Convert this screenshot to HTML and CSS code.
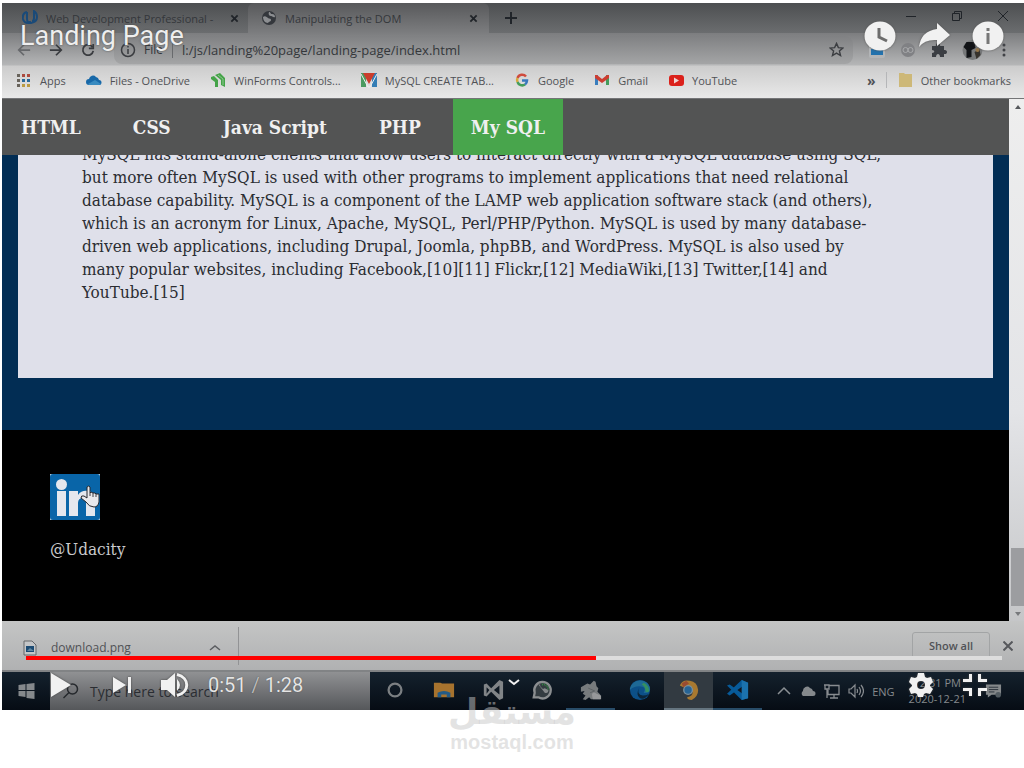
FILE: index.html
```html
<!DOCTYPE html>
<html lang="en">
<head>
<meta charset="utf-8">
<title>Landing Page</title>
<link rel="stylesheet" href="styles.css">
</head>
<body>
<main class="player">
  <header class="chrome">
    <div class="tabs">
      <div class="tab tab-first">
        <svg class="icon16" viewBox="0 0 16 16" fill="none" stroke="#1a4a78" stroke-width="2"><path d="M5 2Q0 3 1 9q1 4 5 4 2 0 2-2M5 2v7q0 4 4 4 6-1 6-6 0-4-3-6v7q0 3-2 3"/></svg>
        <span>Web Development Professional -</span>
        <button class="x" aria-label="Close tab"><svg viewBox="0 0 10 10"><path d="M1.500 1.500l7 7M8.500 1.500l-7 7"/></svg></button>
      </div>
      <div class="tab tab-active">
        <svg class="icon16" viewBox="0 0 16 16"><circle cx="8" cy="8" r="7" fill="#34373c"/><path d="M2 7c2-2 4 0 5 1s3 0 3 2-2 1-3 3c-3 0-5-3-5-6zM8 2c2 0 1 2 3 2s3 1 3 3c-2 1-2-1-4-1S7 4 8 2z" fill="#8c8e91"/></svg>
        <span>Manipulating the DOM</span>
        <button class="x" aria-label="Close tab"><svg viewBox="0 0 10 10"><path d="M1.500 1.500l7 7M8.500 1.500l-7 7"/></svg></button>
      </div>
      <button class="new-tab" aria-label="New tab"><svg viewBox="0 0 12 12"><path d="M6 0v12M0 6h12"/></svg></button>
      <div class="window-buttons">
        <button aria-label="Minimize"><svg viewBox="0 0 12 12"><path d="M1 6.500h10"/></svg></button>
        <button aria-label="Restore"><svg viewBox="0 0 12 12"><path d="M1.500 3.500h7v7h-7zM3.500 3.500v-2h7v7h-2"/></svg></button>
        <button aria-label="Close"><svg viewBox="0 0 12 12"><path d="M1 1l10 10M11 1L1 11"/></svg></button>
      </div>
    </div>
    <div class="toolbar">
      <button class="nav-button dim" aria-label="Back"><svg viewBox="0 0 16 16"><path d="M15 8H2M8 2L2 8l6 6"/></svg></button>
      <button class="nav-button" aria-label="Forward"><svg viewBox="0 0 16 16"><path d="M1 8h13M8 2l6 6-6 6"/></svg></button>
      <button class="nav-button" aria-label="Reload"><svg viewBox="0 0 16 16"><path d="M13 4.500A6 6 0 1 0 14 9M14 1v5H9"/></svg></button>
      <div class="address">
        <svg class="icon16" viewBox="0 0 16 16" fill="none" stroke="#3a3c40" stroke-width="1.500"><circle cx="8" cy="8" r="6.500"/><path d="M8 7v5M8 4v1.500"/></svg>
        <span class="scheme">File</span>
        <span class="url">l:/js/landing%20page/landing-page/index.html</span>
        <svg class="star" viewBox="0 0 16 16" fill="none" stroke="#3c3e42" stroke-width="1.500"><path d="M8 1.500l2 4.500 4.800.400-3.700 3.200 1.200 4.800L8 11.800l-4.300 2.600 1.200-4.800L1.200 6.400 6 6z"/></svg>
      </div>
      <div class="extensions">
        <svg viewBox="0 0 16 16"><rect width="16" height="15" y="1" rx="2" fill="#b3b5b7"/><rect x="2" y="7" width="12" height="6" fill="#2372ad"/></svg>
        <svg viewBox="0 0 16 16"><circle cx="8" cy="8" r="7" fill="#808184"/><g fill="none" stroke="#a8a9ab"><circle cx="5.500" cy="8" r="2.500"/><circle cx="10.500" cy="8" r="2.500"/></g></svg>
        <svg viewBox="0 0 16 16"><path d="M1 4h4c-1-4 5-4 4 0h4v4c4-1 4 5 0 4v3H9c0-4-4-4-4 0H1v-4c3 0 3-3 0-3z" fill="#3b3e43"/></svg>
        <svg class="avatar" viewBox="0 0 20 20"><circle cx="10" cy="10" r="10" fill="#77797a"/><path d="M1 7l3-5h8l1 6-4 2v7l-5 1V10z" fill="#111316"/><path d="M12 12l5-3 1 6-4 4z" fill="#36322c"/><circle cx="15" cy="10" r="2" fill="#93754a"/></svg>
        <svg class="dots" viewBox="0 0 4 16"><g fill="#404246"><circle cx="2" cy="3" r="1.500"/><circle cx="2" cy="8" r="1.500"/><circle cx="2" cy="13" r="1.500"/></g></svg>
      </div>
    </div>
    <nav class="bookmarks" aria-label="Bookmarks">
      <a href="#"><svg viewBox="0 0 16 16"><g fill="#68635b"><path d="M1 2h3v3H1zM1 7h3v3H1zM1 12h3v3H1z"/></g><path d="M6 2h3v3H6zM11 2h3v3h-3z" fill="#ab4a3e"/><path d="M6 7h3v3H6zM11 7h3v3h-3z" fill="#28699a"/><path d="M6 12h3v3H6zM11 12h3v3h-3z" fill="#ba9b43"/></svg>Apps</a>
      <a href="#"><svg viewBox="0 0 16 16"><path d="M3 13a3 3 0 0 1 0-6 4 4 0 0 1 7-2 4 4 0 0 1 3 3 2.500 2.500 0 0 1 0 5z" fill="#1768a8"/><path d="M2 12l7-4 6 4-2 1H3z" fill="#398bc0"/></svg>Files - OneDrive</a>
      <a href="#"><svg viewBox="0 0 16 16"><path d="M1 5l3-1 4 4v7H5v-5L1 7zM5 3l5-2 5 5v9l-4-2V8z" fill="#44a348"/><path d="M8 3l5 4v6" fill="none" stroke="#8cc88e"/></svg>WinForms Controls...</a>
      <a href="#"><svg viewBox="0 0 16 16"><path d="M0 1h5v14H0z" fill="#4b9a60"/><path d="M16 1h-5v14h5z" fill="#347eb5"/><path d="M2 1h12L8 12z" fill="#cb3d2c"/><path d="M0 2l7 13h2l7-13" fill="none" stroke="#eee"/></svg>MySQL CREATE TAB...</a>
      <a href="#"><svg viewBox="0 0 16 16" fill="none" stroke-width="2.500"><path d="M12 4.500A5 5 0 0 0 3.500 6" stroke="#cf4b3d"/><path d="M3.500 6a5 5 0 0 0 0 4" stroke="#d6a83a"/><path d="M3.500 10a5 5 0 0 0 7.500 2.500" stroke="#459d59"/><path d="M11 12.500a5 5 0 0 0 2-4H8" stroke="#3979bd"/></svg>Google</a>
      <a href="#"><svg viewBox="0 0 16 16"><path d="M1 3h3v10H1z" fill="#397dbd"/><path d="M12 3h3v10h-3z" fill="#449c5c"/><path d="M1 3h2l5 4 5-4h2v3l-7 5-7-5z" fill="#cd3d31"/></svg>Gmail</a>
      <a href="#"><svg viewBox="0 0 16 16"><rect x="1" y="3" width="15" height="11" rx="3" fill="#db211b"/><path d="M6 5.500v6l5-3z" fill="#efd5d3"/></svg>YouTube</a>
      <span class="more">»</span>
      <a class="other" href="#"><svg viewBox="0 0 16 16"><path d="M2 1h5l1 1h7v13H2z" fill="#cdb878"/></svg>Other bookmarks</a>
    </nav>
  </header>

  <section class="viewport">
    <div class="page">
      <nav class="site-nav">
        <a href="#">HTML</a><a href="#">CSS</a><a href="#">Java Script</a><a href="#">PHP</a><a class="active" href="#">My SQL</a>
      </nav>
      <div class="band">
        <article class="card">
          <p>MySQL has stand-alone clients that allow users to interact directly with a MySQL database using SQL,<br>but more often MySQL is used with other programs to implement applications that need relational<br>database capability. MySQL is a component of the LAMP web application software stack (and others),<br>which is an acronym for Linux, Apache, MySQL, Perl/PHP/Python. MySQL is used by many database-<br>driven web applications, including Drupal, Joomla, phpBB, and WordPress. MySQL is also used by<br>many popular websites, including Facebook,[10][11] Flickr,[12] MediaWiki,[13] Twitter,[14] and<br>YouTube.[15]</p>
        </article>
      </div>
      <footer class="site-footer">
        <a class="linkedin" href="#" aria-label="LinkedIn">
          <svg viewBox="0 0 50 46"><rect width="50" height="46" fill="#b9c9d6"/><rect width="50" height="46" rx="3" fill="#0965a8"/><g fill="#e4e7ee"><circle cx="11.500" cy="10.500" r="5.500"/><path d="M7 17h9v25H7zM19 17h9v4c3-5 9-5 13-3 3 2 4 5 4 9v15h-9V29c0-7-8-6-8 0v13h-9z"/></g><path d="M37 13q2-2 3 0v6l1-1 2 1 2 0 1 1 3 0v8q-1 5-5 5-5 0-8-5l-5-4q0-3 3-2l3 2z" fill="#e9e9ec" stroke="#25272c"/><path d="M40 19v3M43 19v4M46 20v3" stroke="#3a3c42"/></svg>
        </a>
        <p>@Udacity</p>
      </footer>
    </div>
    <div class="scrollbar"><span class="arrow-up"></span><span class="thumb"></span><span class="arrow-down"></span></div>
  </section>

  <section class="downloads">
    <div class="file">
      <svg viewBox="0 0 14 16"><path d="M1 1h8l4 4v10H1z" fill="#c4c6c8" stroke="#66686b"/><path d="M3 6h8v6H3z" fill="#1c4b73"/><path d="M4 11l3-3 4 3" fill="#6088a2"/></svg>
      <span>download.png</span>
      <button aria-label="File options"><svg viewBox="0 0 12 8" fill="none" stroke="#5b5d60" stroke-width="1.500"><path d="M1 6l5-4 5 4"/></svg></button>
    </div>
    <button class="show-all">Show all</button>
    <button class="x close-bar" aria-label="Close downloads"><svg viewBox="0 0 10 10"><path d="M.5.5l9 9M9.500.5l-9 9"/></svg></button>
  </section>

  <section class="taskbar">
    <button class="start" aria-label="Start"><svg viewBox="0 0 16 16" fill="#85898c"><path d="M0 2l7-1v6H0zM8 1l8-1v7H8zM0 8h7v6l-7-1zM8 8h8v8l-8-1z"/></svg></button>
    <div class="search"><svg viewBox="0 0 16 16" fill="none" stroke="#25282c" stroke-width="1.500"><circle cx="10" cy="6" r="5"/><path d="M6.500 9.500L1 15"/></svg><span>Type here to search</span></div>
    <div class="apps">
      <span><svg viewBox="0 0 24 24"><circle cx="12" cy="12" r="7" fill="none" stroke="#7b7f82" stroke-width="2.500"/></svg></span>
      <span><svg viewBox="0 0 24 24"><path d="M1 4h7l2 1h13v15H1z" fill="#a7732e"/><path d="M5 20v-5q7-4 14 0v5h-4v-3H9v3z" fill="#245b86"/></svg></span>
      <span><svg viewBox="0 0 24 24"><path d="M2 6l3-1 5 5 9-9 4 2v18l-4 2-9-9-5 5-3-1zM5 9v7l3-4zM19 7l-6 5 6 5z" fill="#818487" fill-rule="evenodd"/></svg></span>
      <span><svg viewBox="0 0 24 24"><path d="M3 20l1-5a9 9 0 1 1 4 5z" fill="#343c41" stroke="#8b8e90" stroke-width="2.500"/><path d="M8 6l7 9q4 1 4-3l-4-2-2 1-3-3V6z" fill="#85888a"/><path d="M12 6q6-1 7 6" fill="none" stroke="#318a42" stroke-width="2" stroke-dasharray="1 1"/></svg></span>
      <span class="open"><svg viewBox="0 0 24 24"><path d="M1 9l7-4 3 1 4-4 2 1 1 5 2 2-1 4 3 3v5H12l-2-2-4 3-3-1 3-4-3-2 2-3-4 1z" fill="#777b7d"/><path d="M13 17q1-4 5-1l5 2v4h-9z" fill="#96989a"/><path d="M9 10l7 3-5 2" fill="none" stroke="#5b6064"/></svg></span>
      <span><svg viewBox="0 0 24 24"><circle cx="12" cy="12" r="11" fill="#0c5088"/><path d="M1 10Q5 0 15 2q8 2 8 10-1 4-7 3 4-7-5-7-6 0-10 4z" fill="#1e6995"/><path d="M16 4q6 3 6 9-1 2-4 1 0-6-4-8z" fill="#348f61"/><path d="M11 10q-3 7 4 8 4 0 7-2-5 7-10 5-5-4-1-11z" fill="#0b263b"/></svg></span>
      <span class="current"><svg viewBox="0 0 24 24"><path d="M2 7Q5 0 13 2q8 1 9 10 0 7-7 11-5 0-5-3 6-1 6-6L2 7z" fill="#a87930"/><circle cx="11" cy="12" r="5.500" fill="#7b8f9b"/><circle cx="11" cy="12" r="4" fill="#276495"/><path d="M4 5l5-3 3 3-6 4z" fill="#9a4c31"/></svg></span>
      <span class="open"><svg viewBox="0 0 24 24"><path d="M0 7l3-1 14 10V8L3 18l-3-2L16 1l7 3v17l-7 2z" fill="#075a99"/><path d="M16 1l7 3v17l-7 2z" fill="#1b72ae"/></svg></span>
    </div>
    <div class="tray">
      <svg viewBox="0 0 16 16" fill="none" stroke="#8b9094" stroke-width="1.500"><path d="M2 11l6-6 6 6"/></svg>
      <svg viewBox="0 0 16 16"><path d="M3 13a3 3 0 0 1 0-5 4 4 0 0 1 7-3 4 4 0 0 1 3 3 2.500 2.500 0 0 1 0 5z" fill="#85898c"/></svg>
      <svg viewBox="0 0 16 16" fill="none" stroke="#888c90" stroke-width="1.300"><path d="M5 2.500h10v9H4V7M10 12v3M6 15h8M0 2h5v4H1V2M3 6v9"/></svg>
      <svg viewBox="0 0 16 16" fill="none" stroke="#888c90" stroke-width="1.200"><path d="M1 6h2l4-4v12l-4-4H1zM9 6q1 2 0 4M11 4q3 4 0 8M13 2q5 6 0 12"/></svg>
      <span>ENG</span>
      <time>12:31 PM<br>2020-12-21</time>
      <svg class="notice" viewBox="0 0 18 16"><path d="M1 1h16v11H7l-4 3v-3H1z" fill="#85898b"/><path d="M4 4h10M4 6.500h10M4 9h6" stroke="#283139"/><circle cx="14" cy="12" r="3" fill="#535c62"/></svg>
    </div>
  </section>

  <div class="overlay-top">
    <h1>Landing Page</h1>
    <div class="actions">
      <button aria-label="Watch later"><svg viewBox="0 0 32 30"><ellipse cx="16" cy="15" rx="15.500" ry="14.500" fill="#f1f1f1"/><path d="M15 7v9l8 4" fill="none" stroke="#6d6d6d" stroke-width="3"/></svg></button>
      <button aria-label="Share"><svg viewBox="0 0 32 30"><path d="M19 2l13 12-13 11v-6Q7 18 1 26 3 10 19 8z" fill="#f1f1f1"/></svg></button>
      <button aria-label="Info"><svg viewBox="0 0 32 30"><ellipse cx="16" cy="15" rx="15.500" ry="14.500" fill="#f1f1f1"/><path d="M16 12v11M16 7v3" stroke="#777" stroke-width="3"/></svg></button>
    </div>
  </div>

  <div class="overlay-bottom">
    <div class="progress"><div class="played" style="width:58.400%"></div></div>
    <div class="controls">
      <button aria-label="Play"><svg class="play" viewBox="0 0 22 24"><path d="M1 0l20 12L1 24z"/></svg></button>
      <button aria-label="Next"><svg class="next" viewBox="0 0 20 18"><path d="M1 1l13 8-13 8zM16 1h3v16h-3z"/></svg></button>
      <button aria-label="Mute"><svg class="volume" viewBox="0 0 28 24"><path d="M0 7h6l8-7v24l-8-7H0zM16 6q6 6 0 12z"/><path d="M16 1.500c13 3 13 18 0 21" fill="none" stroke="#f1f1f1" stroke-width="3"/></svg></button>
      <span class="time">0:51 <i>/</i> 1:28</span>
      <div class="right">
        <button aria-label="Settings"><svg class="gear" viewBox="0 0 24 24"><path fill-rule="evenodd" d="M9 0h6l1 4 2 1 4-1 2 5-3 3v1l3 3-3 5-4-1-2 1-1 3H9l-1-3-2-1-4 1-2-5 3-3v-1L0 9l2-5 4 1 2-1zM12 8a4 4 0 1 0 0 8 4 4 0 0 0 0-8z"/></svg></button>
        <button aria-label="Exit full screen"><svg class="fullscreen" viewBox="0 0 24 22"><path d="M7.500 0v6.500H0M16.500 0v6.500H24M0 15.500h7.500V22M24 15.500h-7.500V22" fill="none" stroke="#f1f1f1" stroke-width="3"/></svg></button>
      </div>
    </div>
    <button class="expand" aria-label="More videos"><svg viewBox="0 0 12 7" fill="none" stroke="#f1f1f1" stroke-width="2"><path d="M1 1l5 4 5-4"/></svg></button>
  </div>
</main>
<div class="watermark"><span class="brand" lang="ar" dir="rtl">مستقل</span><span class="domain">mostaql.com</span></div>
</body>
</html>
```
FILE: styles.css
```css
* { box-sizing: border-box; }
body { margin: 0; background: #fff; font-family: "Open Sans", sans-serif; font-size: 11px; color: #34373b; }
button { display: inline-flex; align-items: center; justify-content: center; padding: 0; border: 0; background: none; color: inherit; font: inherit; }
a { color: inherit; text-decoration: none; }
svg { display: block; flex: none; }
p, h1 { margin: 0; }
.player { position: relative; margin: 3px 0 0 2px; }
.icon16 { width: 16px; height: 16px; }

.chrome { background: linear-gradient(#515355, #7c7d7f 30px, #b5b6b7 62px, #ccc 63px, #e8e8e8 94px); border-bottom: 1px solid #747577; }
.tabs { display: flex; height: 30px; background: linear-gradient(#4d4f51, #6b6d6f); }
.tab { display: flex; align-items: center; gap: 8px; height: 30px; }
.tab-first { width: 246px; padding: 0 8px 0 20px; }
.tab-active { width: 241px; padding: 0 10px 0 13px; border-radius: 6px 6px 0 0; background: linear-gradient(#58595b, #7c7d7f); }
.tab span { flex: 1; white-space: nowrap; }
.x { width: 12px; height: 16px; }
.x svg { width: 9px; height: 9px; stroke: #202429; stroke-width: 2; }
.new-tab { width: 44px; }
.new-tab svg { width: 12px; height: 12px; stroke: #202429; stroke-width: 2; }
.window-buttons { display: flex; align-items: center; gap: 34px; margin-left: auto; padding: 0 15px 4px 0; }
.window-buttons svg { width: 12px; height: 12px; fill: none; stroke: #202429; }
.toolbar { display: flex; align-items: center; height: 33px; padding: 0 18px 0 14px; gap: 16px; }
.nav-button svg { width: 16px; height: 14px; fill: none; stroke: #393b3f; stroke-width: 2; }
.dim svg { stroke: #66686b; }
.address { display: flex; flex: 1; align-items: center; height: 28px; margin-left: 2px; padding: 0 9px 0 6px; border-radius: 8px; background: linear-gradient(#808183, #a4a5a6); font-size: 13px; }
.scheme { margin: 0 9px 0 8px; padding-right: 9px; border-right: 1px solid #686a6d; font-size: 12px; line-height: 16px; }
.star { width: 15px; height: 15px; margin-left: auto; }
.extensions { display: flex; align-items: center; gap: 15px; }
.extensions svg { width: 16px; height: 16px; }
.extensions .avatar { width: 21px; height: 20px; }
.extensions .dots { width: 4px; margin-left: 4px; }
.bookmarks { display: flex; align-items: center; gap: 20px; height: 32px; padding: 0 13px 4px 14px; white-space: nowrap; color: #505256; }
.bookmarks a { display: flex; align-items: center; gap: 8px; }
.bookmarks svg { width: 16px; height: 16px; }
.more { margin-left: auto; font-weight: bold; font-size: 14px; }
.bookmarks .other { margin-left: -10px; padding-left: 10px; border-left: 1px solid #b5b6b8; }

.viewport { display: flex; height: 522px; overflow: hidden; }
.page { position: relative; flex: 1; overflow: hidden; }
.site-nav { position: relative; z-index: 1; display: flex; height: 56px; background: #535454; color: #f0f0f0; font: bold 19px/56px "DejaVu Serif Condensed", "DejaVu Serif", serif; white-space: nowrap; }
.site-nav a { padding: 0 26px; }
.site-nav a:first-child { padding-left: 19px; }
.site-nav .active { padding: 0 18px; margin-left: 6px; background: #48a54c; }
.band { display: flow-root; padding: 0 16px 52px; background: #022d54; }
.card { display: flow-root; height: 223px; padding: 0 64px; background: #dfe0ea; color: #2b2d32; font: 17px/23px "DejaVu Serif Condensed", "DejaVu Serif", serif; white-space: nowrap; }
.card p { margin-top: -12px; }
.site-footer { height: 192px; padding: 44px 48px; background: #000; color: #c9cacc; font: 17px/20px "DejaVu Serif Condensed", "DejaVu Serif", serif; }
.linkedin { display: block; width: 50px; margin-bottom: 19px; }
.linkedin svg { width: 50px; height: 46px; }
.scrollbar { display: flex; flex-direction: column; align-items: center; width: 15px; padding: 6px 0 5px 2px; background: linear-gradient(#eee, #e3e4e7 60%, #c5c6c8); }
.arrow-up, .arrow-down { border: 3px solid transparent; }
.arrow-up { border-bottom: 4px solid #55585c; border-top: 0; }
.arrow-down { border-top: 4px solid #77797c; border-bottom: 0; }
.thumb { width: 13px; height: 58px; margin: auto 0 6px; background: #9c9da0; }

.downloads { display: flex; align-items: center; height: 51px; padding: 0 10px 0 20px; background: linear-gradient(#c4c5c5, #b0b1b2); border-bottom: 2px solid #818385; color: #505256; font-size: 12px; }
.file { display: flex; align-items: center; gap: 14px; width: 217px; height: 38px; padding: 4px 17px 0 1px; border-right: 1px solid #929395; }
.file > svg { width: 14px; height: 16px; }
.file span { flex: 1; }
.file button svg { width: 12px; height: 8px; }
.show-all { width: 78px; height: 28px; margin-left: auto; border: 1px solid #a2a4a5; border-radius: 3px; font-size: 11px; font-weight: 600; }
.close-bar { margin-left: 12px; }
.close-bar svg { width: 10px; height: 10px; stroke: #56585c; }

.taskbar { display: flex; height: 38px; background: linear-gradient(#14212d, #060c14); color: #85898c; }
.start { width: 48px; }
.start svg { width: 17px; height: 16px; }
.search { display: flex; align-items: center; width: 320px; padding-left: 12px; gap: 11px; background: linear-gradient(#909193, #55575a); color: #2a2d32; font-size: 14px; }
.search svg { width: 17px; height: 16px; }
.apps { display: flex; }
.apps span { display: flex; align-items: center; justify-content: center; width: 49px; border-bottom: 2px solid transparent; }
.apps svg { width: 24px; height: 22px; }
.apps .open { border-color: #284c68; }
.apps .current { background: #323a41; border-color: #657580; }
.tray { display: flex; align-items: center; gap: 8px; margin-left: auto; padding: 0 22px 0 0; font-size: 11px; }
.tray svg { width: 16px; height: 16px; }
.tray time { padding: 0 11px 0 6px; line-height: 16px; text-align: center; white-space: nowrap; }
.tray .notice { width: 17px; height: 16px; }

.overlay-top { position: absolute; top: 17px; left: 18px; right: 20px; display: flex; justify-content: space-between; color: #eee; }
.overlay-top h1 { font: 27px/32px Roboto, sans-serif; text-shadow: 0 0 2px #444; }
.actions { display: flex; gap: 22px; }
.actions svg { width: 32px; height: 32px; filter: drop-shadow(0 0 1px #555); }
.overlay-bottom { position: absolute; left: 24px; right: 22px; bottom: 0; height: 54px; }
.progress { height: 4px; background: #ddd; }
.played { height: 4px; background: #f00; }
.controls { display: flex; align-items: center; height: 50px; padding: 0 15px 0 24px; }
.controls svg { fill: #f1f1f1; filter: drop-shadow(0 0 1px #444); }
.play { width: 22px; height: 24px; }
.next { width: 20px; height: 18px; margin-left: 40px; }
.volume { width: 28px; height: 24px; margin-left: 29px; }
.time { margin-left: 19px; color: #e5e5e5; font: 20px/24px Roboto, sans-serif; text-shadow: 0 0 1px #444; }
.time i { font-style: normal; color: #bbb; }
.right { display: flex; gap: 30px; margin-left: auto; }
.gear { width: 24px; height: 24px; }
.fullscreen { width: 24px; height: 22px; }
.expand { position: absolute; top: 23px; left: 50%; width: 12px; margin-left: -6px; }
.expand svg { width: 12px; height: 7px; }

.watermark { position: relative; display: flex; flex-direction: column; align-items: center; margin-top: -18px; color: rgba(200, 200, 200, .5); pointer-events: none; }
.brand { font: bold 35px/40px "DejaVu Sans", sans-serif; }
.domain { font: bold 20px/20px "Liberation Sans", sans-serif; }
```
